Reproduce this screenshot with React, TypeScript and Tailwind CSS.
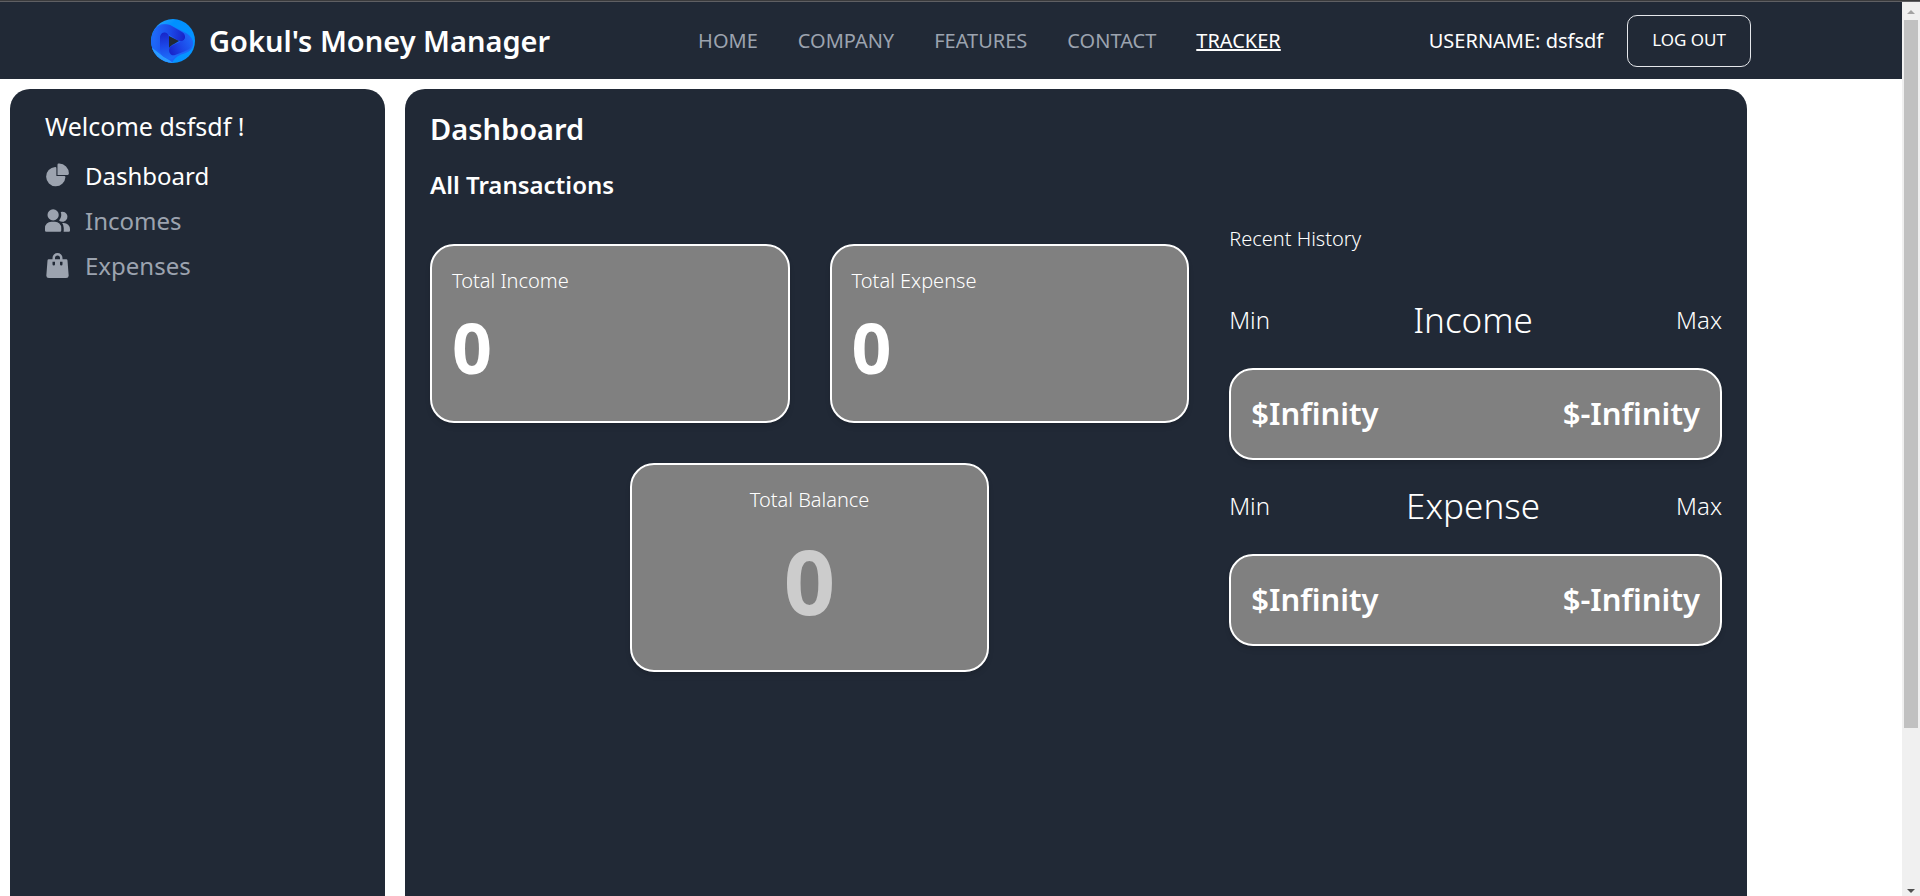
import type { ReactNode } from "react";

const navItems = ["HOME", "COMPANY", "FEATURES", "CONTACT", "TRACKER"];

function Logo() {
  return (
    <svg className="size-11 shrink-0" viewBox="0 0 44 44" aria-hidden="true">
      <defs>
        <clipPath id="disc">
          <circle cx="22" cy="22" r="22" />
        </clipPath>
        <linearGradient id="ring" x1="0" y1="0" x2="1" y2="1">
          <stop offset="0" stopColor="#38adff" />
          <stop offset="0.3" stopColor="#0090ff" />
          <stop offset="1" stopColor="#0894ff" />
        </linearGradient>
        <linearGradient id="band" gradientUnits="userSpaceOnUse" x1="2" y1="14" x2="34" y2="18">
          <stop offset="0" stopColor="#1f6cfa" />
          <stop offset="0.5" stopColor="#1c4cea" />
          <stop offset="1" stopColor="#1822c6" />
        </linearGradient>
        <linearGradient id="stem" gradientUnits="userSpaceOnUse" x1="13" y1="12" x2="18" y2="42">
          <stop offset="0" stopColor="#1722c4" />
          <stop offset="0.5" stopColor="#1c48e8" />
          <stop offset="1" stopColor="#1c74fc" />
        </linearGradient>
        <linearGradient id="arm" gradientUnits="userSpaceOnUse" x1="42" y1="20" x2="18" y2="33">
          <stop offset="0" stopColor="#1f6cfa" />
          <stop offset="0.5" stopColor="#1c48e8" />
          <stop offset="1" stopColor="#1722c8" />
        </linearGradient>
      </defs>
      <g clipPath="url(#disc)">
        <rect width="44" height="44" fill="url(#ring)" />
        <path d="M0 24C0 10 8 2 19 6l14 7c8 4 11 10 8 16-2 4-7 5-12 7-4 2-6 4-8 8C9 44 0 36 0 24Z" fill="#1c66f8" />
        <path d="M0 28C2 38 10 43 20 44h2c-4-4-9-5-13-9Z" fill="#2a9bff" />
        <path d="M9 18c0-3 2-5 5-5 2 0 4 2 4 5v12c0 4 3 8 8 6-3 3-5 4-7 4C13 39 9 36 9 31Z" fill="url(#stem)" />
        <path d="M2 16C5 7 12 4 19 6l12 7c4 2 4 8 1 9-2 1-4 0-6-1l-9-6c-4-3-8-1-8 3v15C4 30 1 24 2 16Z" fill="url(#band)" />
        <path d="M18 31c0-3 2-4 4-5l9-4c3-1 4-4 3-8 7 4 9 9 6 14-2 3-6 4-8 5l-8 3c-3 1-6-1-6-5Z" fill="url(#arm)" />
        <path d="M18 17v12c1-2 3-3 5-4l5-3Z" fill="#212936" />
      </g>
    </svg>
  );
}

function PieIcon() {
  return (
    <svg className="size-[25px] shrink-0" viewBox="0 0 22 21" fill="currentColor" aria-hidden="true">
      <path d="M16.975 11H10V4.025a1 1 0 0 0-1.066-.998 8.5 8.5 0 1 0 9.039 9.039.999.999 0 0 0-1-1.066h.002Z" />
      <path d="M12.5 0c-.157 0-.311.01-.565.027A1 1 0 0 0 11 1.02V10h8.975a1 1 0 0 0 1-.935c.013-.188.028-.374.028-.565A8.51 8.51 0 0 0 12.5 0Z" />
    </svg>
  );
}

function UsersIcon() {
  return (
    <svg className="size-[25px] shrink-0" viewBox="0 0 20 18" fill="currentColor" aria-hidden="true">
      <path d="M14 2a3.963 3.963 0 0 0-1.4.267 6.439 6.439 0 0 1-1.331 6.638A4 4 0 1 0 14 2Zm1 9h-1.264A6.957 6.957 0 0 1 15 15v2a2.97 2.97 0 0 1-.184 1H19a1 1 0 0 0 1-1v-1a5.006 5.006 0 0 0-5-5ZM6.5 9a4.5 4.5 0 1 0 0-9 4.5 4.5 0 0 0 0 9ZM8 10H5a5.006 5.006 0 0 0-5 5v2a1 1 0 0 0 1 1h11a1 1 0 0 0 1-1v-2a5.006 5.006 0 0 0-5-5Z" />
    </svg>
  );
}

function BagIcon() {
  return (
    <svg className="size-[25px] shrink-0" viewBox="0 0 18 20" fill="currentColor" aria-hidden="true">
      <path d="M17 5.923A1 1 0 0 0 16 5h-3V4a4 4 0 1 0-8 0v1H2a1 1 0 0 0-1 .923L.086 17.846A2 2 0 0 0 2.08 20h13.84a2 2 0 0 0 1.994-2.153L17 5.923ZM7 9a1 1 0 0 1-2 0V7h2v2Zm0-5a2 2 0 1 1 4 0v1H7V4Zm6 5a1 1 0 1 1-2 0V7h2v2Z" />
    </svg>
  );
}

function SideLink({ icon, label, active = false }: { icon: ReactNode; label: string; active?: boolean }) {
  return (
    <li>
      <a href="#" className="flex h-[45px] items-center gap-[15px] text-[#9ca3af]">
        {icon}
        <span className={active ? "text-white" : "text-[#9ca3af]"}>{label}</span>
      </a>
    </li>
  );
}

function Stat({ label, value }: { label: string; value: string }) {
  return (
    <div className="col-span-2 h-[179px] rounded-3xl border-2 border-white bg-[#808080] px-5 pt-[19px] shadow-md">
      <h3 className="text-xl leading-8 font-light">{label}</h3>
      <p className="mt-3.5 text-[70px] leading-[72px] font-bold">{value}</p>
    </div>
  );
}

function Range({ title }: { title: string }) {
  return (
    <section>
      <div className="flex h-14 items-center justify-between font-light">
        <span className="text-2xl">Min</span>
        <h3 className="text-[35px]">{title}</h3>
        <span className="text-2xl">Max</span>
      </div>
      <div className="mt-5 flex h-[92px] items-center justify-between rounded-3xl border-2 border-white bg-[#808080] px-5 pb-0.5 text-[31px] font-semibold shadow-md">
        <p>$Infinity</p>
        <p>$-Infinity</p>
      </div>
    </section>
  );
}

function ScrollTrack() {
  return (
    <div className="flex w-[18px] shrink-0 flex-col items-center justify-between bg-[#f0f0f0]" aria-hidden="true">
      <svg className="h-[18px] w-[18px] shrink-0" viewBox="0 0 18 18">
        <path d="M5 12h8L9 8Z" fill="#a3a3a3" />
      </svg>
      <div className="flex w-full flex-1 flex-col px-0.5">
        <div className="basis-[82.5%] bg-[#c1c1c1]" />
      </div>
      <svg className="h-[18px] w-[18px] shrink-0" viewBox="0 0 18 18">
        <path d="M5 11h8l-4 4Z" fill="#505050" />
      </svg>
    </div>
  );
}

export default function App() {
  return (
    <div className="flex h-screen flex-col overflow-hidden bg-white font-['Noto_Sans',sans-serif] text-white">
      <div className="h-0.5 shrink-0 border-b border-[#5f5f63] bg-[#3a3a3c]" />
      <div className="flex min-h-0 flex-1">
        <div className="flex min-w-0 flex-1 flex-col">
          <header className="h-[77px] shrink-0 bg-[#212936]">
            <div className="mx-auto flex h-full max-w-[1600px] items-center justify-between">
              <a href="#" className="flex items-center gap-3.5 text-[29px] font-semibold whitespace-nowrap">
                <Logo />
                Gokul's Money Manager
              </a>
              <nav className="flex gap-10 text-xl">
                {navItems.map((item) => (
                  <a
                    key={item}
                    href="#"
                    className={item === "TRACKER" ? "text-white underline decoration-2" : "text-[#9ca3af]"}
                  >
                    {item}
                  </a>
                ))}
              </nav>
              <div className="flex items-center gap-6 whitespace-nowrap">
                <span className="text-xl">USERNAME: dsfsdf</span>
                <button type="button" className="h-[52px] rounded-[10px] border border-gray-200 px-6 pb-0.5 text-[17px]">
                  LOG OUT
                </button>
              </div>
            </div>
          </header>

          <div className="flex min-h-0 flex-1 gap-5 px-2.5 pt-2.5">
            <aside className="w-[375px] shrink-0 rounded-t-[20px] bg-[#212936] px-[35px] pt-[19px] text-2xl">
              <p className="text-[25px] leading-9">Welcome dsfsdf !</p>
              <ul className="mt-[9px]">
                <SideLink icon={<PieIcon />} label="Dashboard" active />
                <SideLink icon={<UsersIcon />} label="Incomes" />
                <SideLink icon={<BagIcon />} label="Expenses" />
              </ul>
            </aside>

            <main className="mr-[145px] min-w-0 flex-1 rounded-t-[20px] bg-[#212936] px-[25px] pt-5">
              <h1 className="text-[29px] leading-10 font-semibold">Dashboard</h1>
              <h2 className="mt-[18px] text-2xl leading-9 font-semibold">All Transactions</h2>
              <div className="grid grid-cols-5 gap-10">
                <div className="col-span-3 grid grid-cols-4 content-start gap-10 pt-[41px]">
                  <Stat label="Total Income" value="0" />
                  <Stat label="Total Expense" value="0" />
                  <div className="col-span-2 col-start-2 h-[209px] rounded-3xl border-2 border-white bg-[#808080] px-5 pt-[19px] text-center shadow-md">
                    <h3 className="text-xl leading-8 font-light">Total Balance</h3>
                    <p className="mt-[18px] text-[90px] leading-[92px] font-bold opacity-60">0</p>
                  </div>
                </div>
                <div className="col-span-2 flex flex-col pt-5">
                  <h3 className="mb-[37px] text-xl leading-8 font-light">Recent History</h3>
                  <div className="flex flex-col gap-4.5">
                    <Range title="Income" />
                    <Range title="Expense" />
                  </div>
                </div>
              </div>
            </main>
          </div>
        </div>
        <ScrollTrack />
      </div>
    </div>
  );
}
